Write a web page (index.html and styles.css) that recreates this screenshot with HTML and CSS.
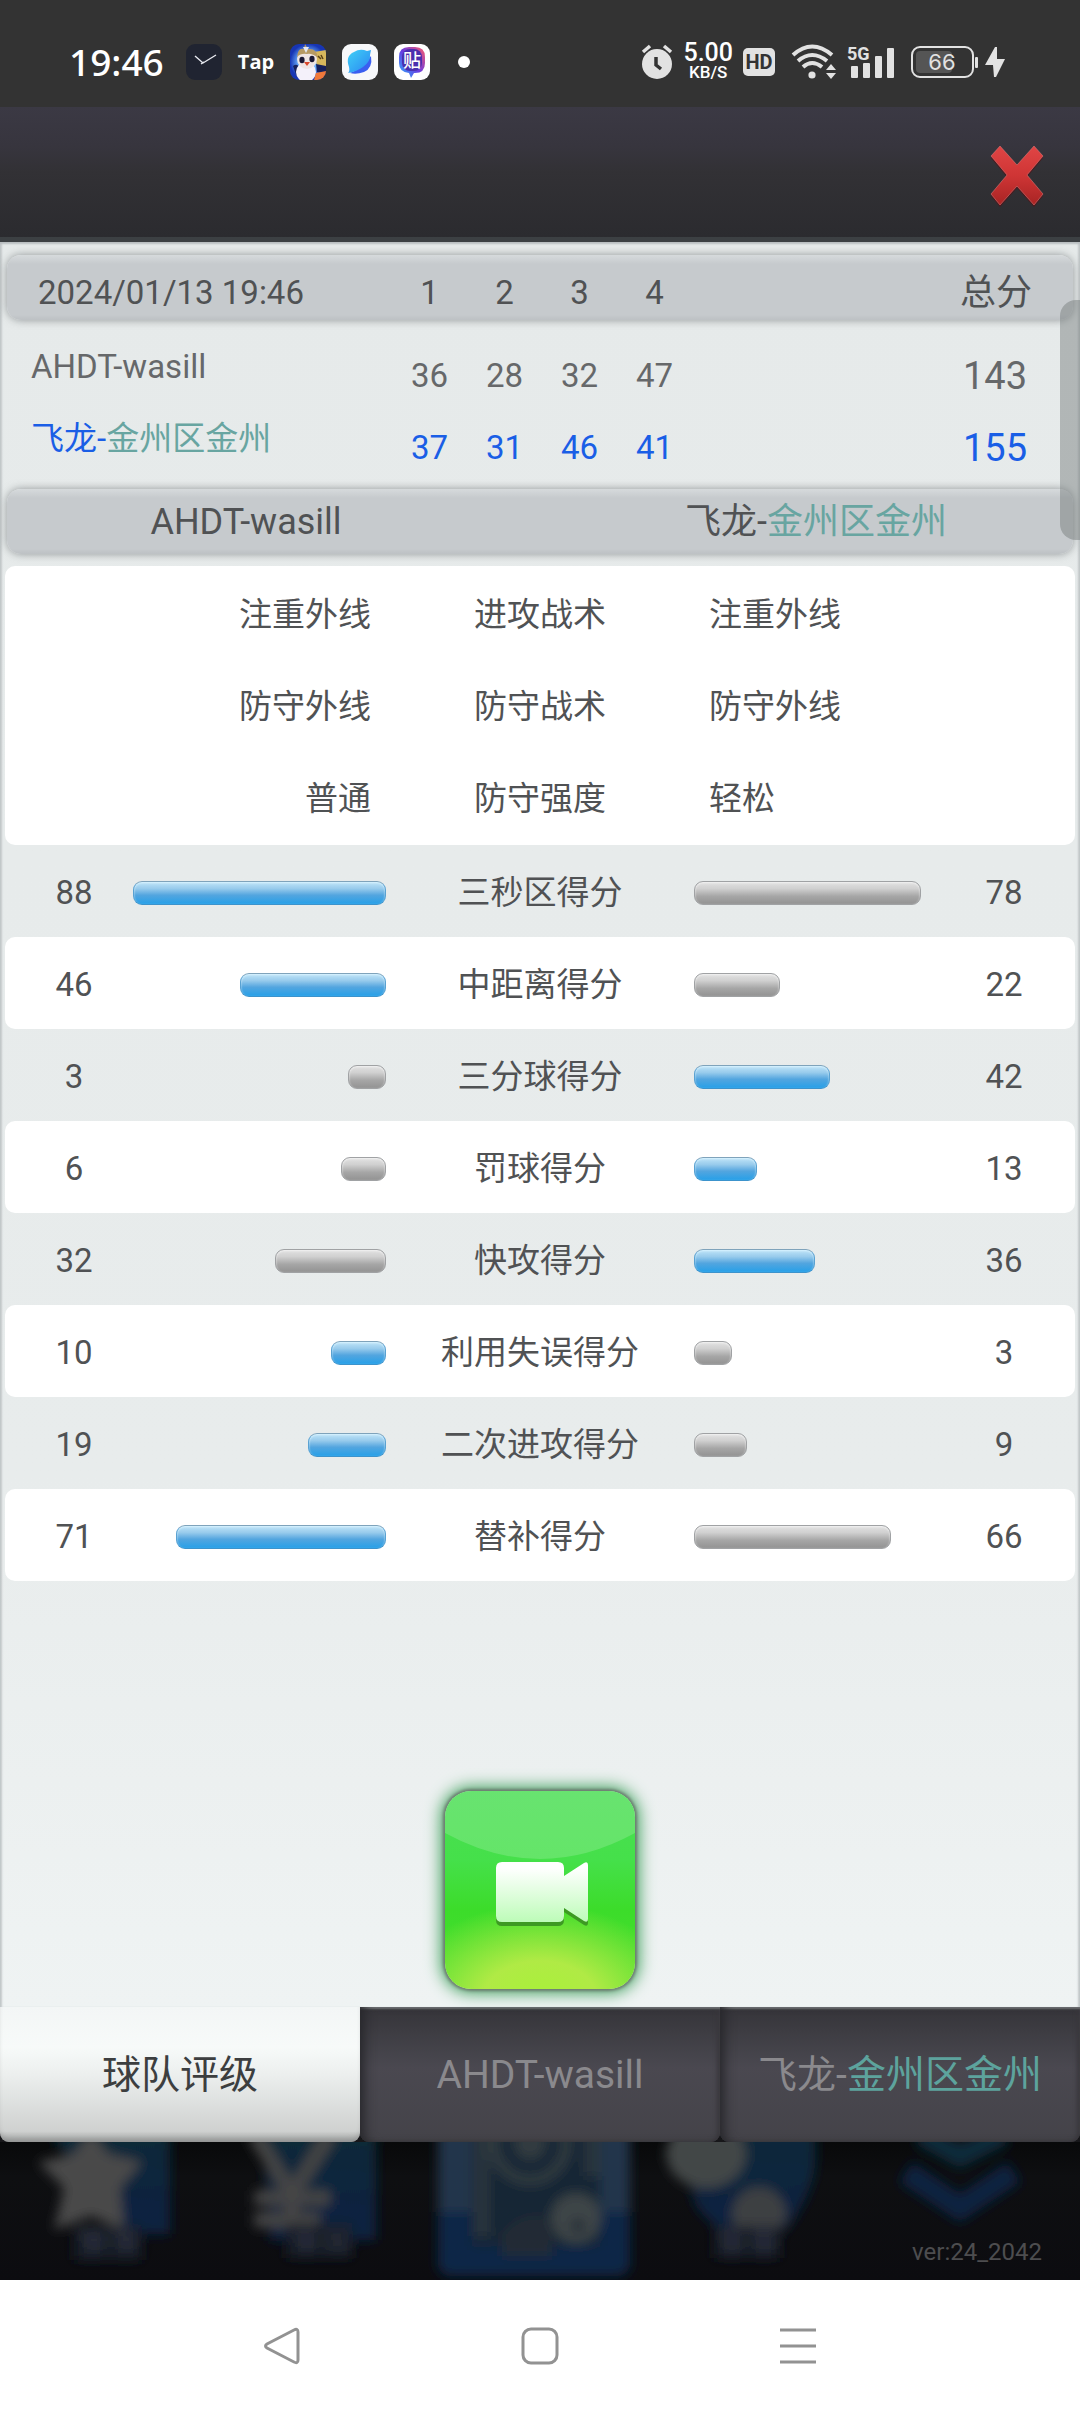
FILE: index.html
```html
<!DOCTYPE html>
<html lang="zh-CN">
<head>
    <meta charset="UTF-8">
    <meta name="viewport" content="width=device-width, initial-scale=1.0">
    <title>球队评级</title>
    <link rel="stylesheet" href="styles.css">
</head>
<body>

<header class="status-bar">
    <div class="status-left">
        <span class="clock">19:46</span>
        <div class="app-icons">
            <svg width="36" height="36" viewBox="0 0 36 36">
                <rect width="36" height="36" rx="9" fill="#202431"/>
                <path d="M9 12 L17 19 L30 11 M15 20 L18 18" fill="none" stroke="#e8eaf0" stroke-width="1.4"/>
            </svg>
            <span class="tap">Tap</span>
            <!-- penguin -->
            <svg width="36" height="36" viewBox="0 0 36 36">
                <defs>
                    <clipPath id="tile"><rect width="36" height="36" rx="9"/></clipPath>
                    <radialGradient id="sky"><stop offset="0.5" stop-color="#6fb4ff"/><stop offset="1" stop-color="#1735b4"/></radialGradient>
                </defs>
                <g clip-path="url(#tile)">
                    <rect width="36" height="36" fill="url(#sky)"/>
                    <path d="M24 8 L36 6 V24 L27 22 Z" fill="#d7b75c"/>
                    <path d="M3 22 Q8 18 10 26 L7 33 Z M26 20 L36 22 V30 L27 28 Z" fill="#16205c"/>
                    <ellipse cx="16" cy="28" rx="10" ry="10" fill="#f4f1fa"/>
                    <circle cx="17" cy="15" r="10" fill="#efe5e4"/>
                    <path d="M7 13 Q8 3 14 5 L15 0 L18 5 Q27 4 28 14 Q22 9 17 10 Q11 9 7 13 Z" fill="#b79a63"/>
                    <path d="M13 3 L16 9 L19 3 Z" fill="#e6eaf5"/>
                    <ellipse cx="12" cy="16" rx="2.6" ry="3.2" fill="#1c1a35"/>
                    <ellipse cx="22" cy="15" rx="2.6" ry="3.2" fill="#1c1a35"/>
                    <path d="M14 18 L20 18 L17 22 Z" fill="#d9482b"/>
                    <path d="M26 29 L36 27 V36 H24 Z" fill="#f0793a"/>
                    <path d="M28 12 l3 3 m0 -4 l2 4" stroke="#5a4218" stroke-width="1.5"/>
                </g>
            </svg>
            <!-- browser bird -->
            <svg width="36" height="36" viewBox="0 0 36 36">
                <defs>
                    <linearGradient id="bird" x1="0" y1="0" x2="1" y2="1"><stop offset="0" stop-color="#3fd0f6"/><stop offset="1" stop-color="#2a86f2"/></linearGradient>
                </defs>
                <rect width="36" height="36" rx="9" fill="#f7f8fa"/>
                <path d="M29 12 Q31 24 22 28 Q14 31 8 29 Q20 25 29 12 Z" fill="#3a5ff0"/>
                <path d="M6 29 Q8 27 7 23 Q3 12 12 8 Q18 4 25 7 L29 6 L28 11 Q29 17 21 23 Q14 28 6 29 Z" fill="url(#bird)"/>
            </svg>
            <svg width="36" height="36" viewBox="0 0 36 36">
                <defs>
                    <linearGradient id="tieba" x1="0" y1="1" x2="1" y2="0"><stop offset="0" stop-color="#29b6ff"/><stop offset="0.5" stop-color="#6a3be0"/><stop offset="1" stop-color="#ff5a6a"/></linearGradient>
                </defs>
                <rect width="36" height="36" rx="9" fill="#fff"/>
                <path d="M15 3 H21 Q31 3 31 13 V19 Q31 29 21 29 H20 L17 34 L15 29 Q5 28 5 19 V13 Q5 3 15 3 Z" fill="url(#tieba)"/>
                <rect x="8" y="5" width="20" height="22" rx="8" fill="#4b2fae"/>
                <text x="18" y="23" text-anchor="middle" class="tile-text">贴</text>
            </svg>
        </div>
        <span class="dot"></span>
    </div>

    <div class="status-right">
        <svg width="32" height="36" viewBox="0 0 32 36">
            <circle cx="16" cy="20" r="15" fill="#e2e2e2"/>
            <path d="M2 8 L9 2 M30 8 L23 2" stroke="#e2e2e2" stroke-width="3.5"/>
            <path d="M15 13 V21 L20 25" fill="none" stroke="#333" stroke-width="3.5"/>
        </svg>
        <div class="net-speed"><b>5.00</b><b class="unit">KB/S</b></div>
        <span class="hd">HD</span>
        <svg class="wifi" width="46" height="36" viewBox="0 0 46 36">
            <g fill="none" stroke="#e2e2e2" stroke-width="4">
                <path d="M2 11 Q21 -6 41 11"/>
                <path d="M7 17 Q21 5 36 17"/>
                <path d="M12 23 Q21 15 31 23"/>
            </g>
            <circle cx="21" cy="31" r="3.6" fill="#e2e2e2"/>
            <path d="M35 26 L40 20 L45 26 Z M35 29 L40 35 L45 29 Z" fill="#e2e2e2"/>
        </svg>
        <svg class="signal" width="48" height="36" viewBox="0 0 48 36">
            <text x="0" y="16" class="signal-text">5G</text>
            <g fill="#e2e2e2">
                <rect x="4" y="22" width="7" height="12" rx="1"/>
                <rect x="16" y="19" width="7" height="15" rx="1"/>
                <rect x="28" y="12" width="7" height="22" rx="1"/>
                <rect x="40" y="4" width="7" height="30" rx="1"/>
            </g>
        </svg>
        <svg class="battery" width="68" height="32" viewBox="0 0 68 32">
            <rect x="5" y="5" width="36" height="22" rx="4" fill="#555"/>
            <rect x="1" y="1" width="61" height="30" rx="8" fill="none" stroke="#e2e2e2" stroke-width="2"/>
            <rect x="64" y="11" width="3" height="11" rx="1" fill="#e2e2e2"/>
            <text x="31" y="24" text-anchor="middle" class="battery-text">66</text>
        </svg>
        <svg width="20" height="32" viewBox="0 0 20 32">
            <path d="M10 1 L0 19 H8 L9 31 H11 L20 13 H12 L12 1 Z" fill="#e2e2e2"/>
        </svg>
    </div>
</header>

<div class="title-bar">
    <button class="close" aria-label="关闭">
        <svg width="56" height="64" viewBox="0 0 56 64">
            <defs>
                <linearGradient id="red" x1="0" y1="0" x2="0" y2="1"><stop offset="0" stop-color="#e04545"/><stop offset="0.5" stop-color="#cf3535"/><stop offset="1" stop-color="#a82424"/></linearGradient>
            </defs>
            <path d="M11 4 L28 23 L45 4 L54 14 L38 33 L54 52 L45 63 L28 44 L11 63 L2 52 L18 33 L2 14 Z" fill="#4c1a1e"/>
            <path d="M11 2 L28 21 L45 2 L54 12 L38 31 L54 50 L45 61 L28 42 L11 61 L2 50 L18 31 L2 12 Z" fill="url(#red)" stroke="#e58080" stroke-opacity="0.5"/>
        </svg>
    </button>
</div>

<main class="panel">
    <table class="score">
        <thead>
            <tr class="bar">
                <th class="name">2024/01/13 19:46</th>
                <th>1</th><th>2</th><th>3</th><th>4</th>
                <th class="total">总分</th>
            </tr>
        </thead>
        <tbody>
            <tr>
                <td class="name">AHDT-wasill</td>
                <td>36</td><td>28</td><td>32</td><td>47</td>
                <td class="total">143</td>
            </tr>
            <tr class="winner">
                <td class="name">飞龙-<span class="teal">金州区金州</span></td>
                <td>37</td><td>31</td><td>46</td><td>41</td>
                <td class="total">155</td>
            </tr>
        </tbody>
    </table>

    <div class="bar teams">
        <span>AHDT-wasill</span>
        <span>飞龙-<span class="teal">金州区金州</span></span>
    </div>

    <table class="tactics">
        <tbody>
            <tr><td class="home">注重外线</td><th>进攻战术</th><td>注重外线</td></tr>
            <tr><td class="home">防守外线</td><th>防守战术</th><td>防守外线</td></tr>
            <tr><td class="home">普通</td><th>防守强度</th><td>轻松</td></tr>
        </tbody>
    </table>

    <table class="stats">
        <tbody id="stats"></tbody>
    </table>

    <button class="replay" aria-label="录像">
        <svg width="190" height="198" viewBox="0 0 190 198">
            <defs>
                <linearGradient id="cam" x1="0" y1="0" x2="0" y2="1"><stop offset="0.1" stop-color="#fff"/><stop offset="1" stop-color="#bdfcb8"/></linearGradient>
            </defs>
            <path d="M0 0 H190 V42 Q95 94 0 42 Z" fill="#fff" fill-opacity="0.17"/>
            <path d="M57 75 H113 Q119 75 119 81 V89 L139 76 Q143 74 143 78 V132 Q143 136 139 134 L119 121 V129 Q119 135 113 135 H57 Q51 135 51 129 V81 Q51 75 57 75 Z" fill="#3d9a23"/>
            <path d="M57 71 H113 Q119 71 119 77 V85 L139 72 Q143 70 143 74 V128 Q143 132 139 130 L119 117 V125 Q119 131 113 131 H57 Q51 131 51 125 V77 Q51 71 57 71 Z" fill="url(#cam)"/>
        </svg>
    </button>
    <div class="scroll-thumb"></div>
</main>

<nav class="tabs">
    <button class="tab active">球队评级</button>
    <button class="tab">AHDT-wasill</button>
    <button class="tab">飞龙-<span class="teal">金州区金州</span></button>
</nav>

<footer class="dimmed-menu">
    <svg class="menu-icons" viewBox="0 0 1080 138" preserveAspectRatio="xMidYMin slice">
        <defs>
            <filter id="soft"><feGaussianBlur stdDeviation="6"/></filter>
            <linearGradient id="deep" x1="0" y1="0" x2="0" y2="1"><stop offset="0" stop-color="#0a2a38"/><stop offset="1" stop-color="#0a2042"/></linearGradient>
        </defs>
        <g filter="url(#soft)">
            <path d="M50 -10 H170 V92 H120 Z" fill="url(#deep)"/>
            <path d="M91 -12 L108 12 L142 20 L120 46 L124 88 L91 74 L54 88 L64 46 L38 20 L74 12 Z" fill="#484848"/>
            <rect x="74" y="84" width="68" height="34" fill="#191b26"/>
            <path d="M80 92 H104 M84 102 H106 M92 88 V114 M112 92 H136 M116 102 H138 M126 88 V112" stroke="#2e3040" stroke-width="4"/>

            <path d="M262 -10 H376 V98 H270 Z" fill="url(#deep)"/>
            <path d="M254 -8 L292 52 L330 -8 M254 56 H330 M254 78 H320 M292 48 V88" fill="none" stroke="#444" stroke-width="15"/>
            <rect x="286" y="82" width="66" height="34" fill="#191b26"/>
            <path d="M292 92 H316 M298 102 H316 M306 88 V112 M324 92 H348 M326 104 H350" stroke="#2e3040" stroke-width="4"/>

            <rect x="438" y="-20" width="192" height="154" rx="14" fill="#24364c"/>
            <path d="M438 70 H630 V120 Q630 134 616 134 H452 Q438 134 438 120 Z" fill="#0a2546"/>
            <rect x="472" y="-10" width="128" height="114" fill="#122836"/>
            <path d="M482 -10 V94 M592 -10 V34" stroke="#2b363c" stroke-width="14"/>
            <circle cx="530" cy="2" r="36" fill="none" stroke="#303b40" stroke-width="10"/>
            <circle cx="530" cy="2" r="16" fill="#303b40"/>
            <circle cx="576" cy="76" r="25" fill="#3e4446"/>
            <circle cx="578" cy="84" r="6" fill="#152430"/>
            <path d="M502 92 Q522 66 552 76 V114 H502 Z" fill="#222a36"/>

            <path d="M672 -20 H812 Q824 30 798 70 Q784 96 760 98 Q722 98 696 64 Z" fill="url(#deep)"/>
            <ellipse cx="706" cy="12" rx="40" ry="34" fill="#424647"/>
            <circle cx="759" cy="72" r="27" fill="#3c4042"/>
            <rect x="714" y="84" width="66" height="32" fill="#191b26"/>
            <path d="M718 92 H742 M722 104 H742 M732 86 V114 M750 90 H776 M752 102 H778 M764 84 V114" stroke="#2e3040" stroke-width="4"/>

            <path d="M920 -8 L960 14 L1004 -8" fill="none" stroke="#0b2a3a" stroke-width="22"/>
            <path d="M906 30 L960 66 L1014 30" fill="none" stroke="#0a2440" stroke-width="24"/>
        </g>
    </svg>
    <span class="version">ver:24_2042</span>
</footer>

<nav class="system-nav">
    <button aria-label="返回">
        <svg width="36" height="38" viewBox="0 0 36 38"><path d="M30 3 Q34 1 34 5 V33 Q34 37 30 35 L3 21 Q0 19 3 17 Z"/></svg>
    </button>
    <button aria-label="主页">
        <svg width="38" height="38" viewBox="0 0 38 38"><rect x="2" y="2" width="34" height="34" rx="8"/></svg>
    </button>
    <button aria-label="最近任务">
        <svg width="36" height="38" viewBox="0 0 36 38"><path d="M0 3 H36 M0 19 H36 M0 35 H36"/></svg>
    </button>
</nav>

<script>
    const stats = [
        ['三秒区得分', 88, 78],
        ['中距离得分', 46, 22],
        ['三分球得分', 3, 42],
        ['罚球得分', 6, 13],
        ['快攻得分', 32, 36],
        ['利用失误得分', 10, 3],
        ['二次进攻得分', 19, 9],
        ['替补得分', 71, 66]
    ];

    // The higher side of each row gets the blue meter
    function meter(value, other) {
        const cls = value > other ? 'meter lead' : 'meter';
        return `<div class="${cls}" style="width: calc(30px + ${value}%)"></div>`;
    }

    document.getElementById('stats').innerHTML = stats.map(([label, home, away]) => `
        <tr>
            <td class="value home">${home}</td>
            <td class="track home">${meter(home, away)}</td>
            <th>${label}</th>
            <td class="track">${meter(away, home)}</td>
            <td class="value">${away}</td>
        </tr>`).join('');
</script>
</body>
</html>
```
FILE: styles.css
```css
* {
    box-sizing: border-box;
}
body {
    margin: 0;
    min-height: 100vh;
    display: flex;
    flex-direction: column;
    background-color: #fff;
    color: #505254;
    font-family: Roboto, "Noto Sans CJK SC", sans-serif;
    font-size: 33px;
    line-height: 40px;
}
button {
    border: none;
    padding: 0;
    background: none;
    font: inherit;
    color: inherit;
    cursor: pointer;
}
svg {
    display: block;
    flex: none;
}
.teal {
    color: #68a5a1;
}

/* Phone status bar */
.status-bar {
    display: flex;
    justify-content: space-between;
    align-items: center;
    height: 107px;
    padding: 16px 75px 0 69px;
    background-color: #333;
    color: #fff;
}
.status-left,
.app-icons,
.status-right {
    display: flex;
    align-items: center;
}
.clock {
    width: 117px;
    font-family: "Noto Sans", sans-serif;
    font-size: 37px;
    font-weight: 500;
}
.app-icons {
    gap: 16px;
}
.tap {
    display: flex;
    justify-content: center;
    width: 36px;
    font-family: "Open Sans", sans-serif;
    font-size: 20px;
    font-weight: 700;
    line-height: 36px;
}
.tile-text {
    fill: #fff;
    font-size: 18px;
    font-weight: 500;
}
.dot {
    width: 12px;
    height: 12px;
    margin-left: 28px;
    border-radius: 50%;
    background-color: #fff;
}
.status-right {
    gap: 10px;
}
.net-speed {
    display: flex;
    flex-direction: column;
    align-items: center;
    font-family: Roboto, sans-serif;
    font-size: 25px;
    line-height: 21px;
}
.net-speed b {
    font-weight: 500;
}
.net-speed .unit {
    font-size: 17px;
    line-height: 19px;
}
.hd {
    width: 32px;
    border-radius: 5px;
    background-color: #e2e2e2;
    color: #333;
    font-size: 20px;
    font-weight: 700;
    line-height: 28px;
    text-align: center;
}
.wifi,
.battery {
    margin-left: 6px;
}
.battery {
    margin-right: -4px;
}
.signal-text {
    fill: #e2e2e2;
    font-size: 18px;
    font-weight: 700;
}
.battery-text {
    fill: #e2e2e2;
    font-family: Inter, sans-serif;
    font-size: 22px;
}

/* Title bar */
.title-bar {
    display: flex;
    justify-content: flex-end;
    align-items: center;
    height: 135px;
    padding: 8px 35px 0 0;
    border-bottom: 5px solid #3c4043;
    background: linear-gradient(#3b3944, #37353e 30%, #323135 50%, #2b2b2f);
}

/* Main panel */
.panel {
    position: relative;
    flex: 1;
    display: flex;
    flex-direction: column;
    padding: 13px 5px 18px;
    background: linear-gradient(#e6eaea, #e8ecec 70%, #eff3f3);
    box-shadow: inset 0 2px 2px #b8bdbf, inset 3px 0 2px -1px #c6cbcc, inset -3px 0 2px -1px #c6cbcc;
}
table,
tbody,
thead {
    display: block;
}
tr {
    display: grid;
    align-items: center;
}
th,
td {
    padding: 0;
    font-weight: 400;
    text-align: center;
}
.bar {
    height: 65px;
    margin: 0 2px;
    border-radius: 14px;
    background: linear-gradient(#d6dadc, #c6cacd 14%, #c6cacd 92%, #bdc1c4);
    box-shadow: 0 0 8px rgba(90, 95, 98, 0.6);
}

.score tr {
    grid-template-columns: 385px repeat(4, 75px) 1fr;
}
.score .bar {
    padding-top: 10px;
}
.score tbody {
    padding: 20px 2px 5px;
    color: #66686a;
}
.score tbody tr {
    height: 72px;
}
.score .name {
    padding-left: 24px;
    text-align: left;
}
.score .bar .name {
    padding-left: 31px;
}
.score tbody .name {
    padding-bottom: 18px;
}
.score .total {
    padding-right: 46px;
    font-size: 38px;
    text-align: right;
}
.score .bar .total {
    padding-right: 41px;
    font-size: 36px;
}
.score .winner {
    color: #1a5ee6;
}

.teams {
    display: grid;
    grid-template-columns: 478px 1fr;
    column-gap: 130px;
    align-items: center;
    padding-right: 56px;
    font-size: 36px;
    text-align: center;
}

.tactics {
    margin-top: 12px;
    padding: 2px 0 1px;
    border-radius: 10px;
    background-color: #fff;
}
.tactics tr {
    grid-template-columns: 1fr 308px 1fr;
    height: 92px;
    padding-top: 2px;
}
.tactics td {
    padding-left: 15px;
    text-align: left;
}
.tactics .home {
    padding: 0 15px 0 0;
    text-align: right;
}

.stats tr {
    grid-template-columns: 128px 1fr 308px 1fr 128px;
    height: 92px;
    padding-top: 4px;
    border-radius: 10px;
}
.stats tr:nth-child(even) {
    background-color: #fff;
}
.value {
    padding-right: 14px;
}
.value.home {
    padding: 0 0 0 10px;
}
.track {
    display: flex;
}
.track.home {
    justify-content: flex-end;
}
.meter {
    height: 24px;
    border: 1px solid #a0a2a4;
    border-radius: 9px;
    background: linear-gradient(#e2e2e2, #d0d0d0 30%, #a6a6a6 65%, #939393);
    box-shadow: inset 0 1px 2px #f2f2f2;
}
.meter.lead {
    border-color: #7fa3bb #5aa2d2 #3c93cc;
    background: linear-gradient(#bfe4f8, #98cbec 30%, #53a5df 60%, #27a0e8);
    box-shadow: inset 0 1px 2px #d8f2ff;
}

.replay {
    align-self: center;
    margin-top: auto;
    border-radius: 26px;
    background: radial-gradient(ellipse 75% 48% at 50% 105%, #a8f238, #b0ea45 40%, rgba(61, 222, 45, 0) 100%), linear-gradient(#4ade53, #45e04a 35%, #3cdc2a 60%, #4ae02f);
    box-shadow: 0 0 3px 2px #6f7a72, 0 0 16px 4px #3fa05c;
    overflow: hidden;
}

.scroll-thumb {
    position: absolute;
    top: 58px;
    right: 0;
    width: 20px;
    height: 240px;
    border-radius: 16px 0 0 16px;
    background-color: rgba(112, 120, 120, 0.45);
}

/* Tabs */
.tabs {
    display: grid;
    grid-template-columns: repeat(3, 1fr);
    height: 135px;
    background-color: #17171a;
    font-size: 39px;
}
.tab {
    border-radius: 0 0 9px 9px;
    background: linear-gradient(#353439, #45444b 35%, #4a4850 45%, #444349);
    box-shadow: inset 10px 0 12px -6px #26262a, inset 0 3px 2px -1px #77797b, inset -3px 0 4px #38373c;
    color: #8a898d;
}
.tab.active {
    background: linear-gradient(#f3f6f6, #f7faf9 30%, #ecefee 50%, #cfd1d0 92%, #a3a5a4);
    box-shadow: inset 0 -6px 6px -4px #8d8f8f;
    color: #3c3e3f;
}
.tab .teal {
    color: #5da39d;
}

/* Dimmed home menu behind the dialog */
.dimmed-menu {
    display: flex;
    height: 138px;
    position: relative;
    background: linear-gradient(#08090a, #0e0f11 25%, #0c0c10);
    overflow: hidden;
}
.menu-icons {
    width: 100%;
    height: 100%;
}
.version {
    position: absolute;
    right: 38px;
    bottom: 14px;
    color: #4d4d4f;
    font-size: 24px;
    line-height: 28px;
}

/* Android navigation */
.system-nav {
    display: flex;
    justify-content: center;
    height: 132px;
    background-color: #fff;
}
.system-nav button {
    display: flex;
    justify-content: center;
    align-items: center;
    width: 258px;
}
.system-nav svg {
    fill: none;
    stroke: #929292;
    stroke-width: 3px;
}
```
